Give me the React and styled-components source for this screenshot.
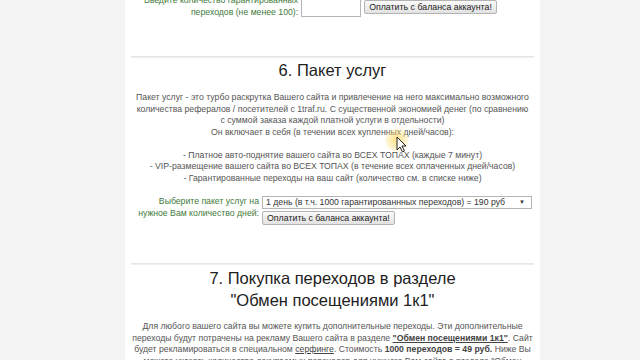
import styled, { createGlobalStyle } from "styled-components";

const Global = createGlobalStyle`
  html, body {
    margin: 0;
    padding: 0;
    background: #f4f4f4;
    overflow: hidden;
  }
  body {
    font-family: "Liberation Sans", Arial, sans-serif;
  }
`;

const Page = styled.div`
  position: relative;
  width: 415px;
  height: 380px;
  margin: -5px 0 0 125px;
  padding: 0 6px;
  box-sizing: border-box;
  background: #fff;
  color: #555;
  font-size: 8.7px;
  line-height: 11.5px;
`;

const Section = styled.section`
  padding: ${(p) => p.$pad || "0"};
  text-align: center;
`;

const Divider = styled.hr`
  margin: 0;
  border: 0;
  height: 2px;
  background: linear-gradient(#e2e2e2, #f2f2f2);
`;

const Heading = styled.h2`
  margin: 0;
  font-family: "Liberation Sans", Arial, sans-serif;
  font-weight: normal;
  font-size: 16.5px;
  line-height: 22px;
  color: #222;
`;

const Text = styled.p`
  margin: ${(p) => p.$m || "0"};
  text-align: center;
`;

const Form = styled.div`
  display: flex;
  justify-content: center;
  align-items: ${(p) => p.$align || "center"};
  gap: 3px;
  margin: ${(p) => p.$m || "0"};
`;

const Label = styled.div`
  width: ${(p) => p.$w};
  text-align: right;
  color: #3f7a3a;
`;

const Field = styled.div`
  display: flex;
  flex-direction: column;
  align-items: flex-start;
  gap: 2px;
`;

const Input = styled.div`
  width: 60px;
  height: 21px;
  border: 1px solid #b5b5b5;
  box-sizing: border-box;
  background: #fff;
`;

const Button = styled.button`
  height: 14px;
  padding: 0 4px;
  border: 1px solid #b3b3b3;
  border-radius: 2px;
  background: linear-gradient(#fafafa, #e2e2e2);
  font-family: "Liberation Sans", Arial, sans-serif;
  font-size: 8.8px;
  line-height: 12px;
  color: #222;
  white-space: nowrap;
`;

const Select = styled.div`
  display: flex;
  justify-content: space-between;
  align-items: center;
  width: 270px;
  height: 13px;
  padding: 0 6px 0 3px;
  box-sizing: border-box;
  border: 1px solid #b5b5b5;
  background: #fff;
  color: #333;
  white-space: nowrap;
`;

const Arrow = styled.span`
  font-size: 6px;
  color: #333;
`;

const Link = styled.a`
  color: #444;
  font-weight: ${(p) => (p.$bold ? "bold" : "normal")};
  text-decoration: underline;
`;

const Strong = styled.b`
  color: #444;
`;

const Cursor = styled.div`
  position: absolute;
  left: 260px;
  top: 133px;
  width: 30px;
  height: 30px;
  pointer-events: none;
`;

const Glow = styled.div`
  position: absolute;
  left: 0;
  top: 0;
  width: 24px;
  height: 24px;
  border-radius: 50%;
  background: radial-gradient(rgba(255, 214, 90, 0.75), rgba(255, 225, 120, 0.3) 60%, rgba(255, 230, 140, 0) 75%);
`;

export default function App() {
  return (
    <>
      <Global />
      <Page>
        <Section $pad="0 0 38px">
          <Form $m="0 0 0 -30px">
            <Label $w="160px">
              Введите количество гарантированных переходов (не менее 100):
            </Label>
            <Input />
            <Button>Оплатить с баланса аккаунта!</Button>
          </Form>
        </Section>
        <Divider />
        <Section $pad="1px 0 38px">
          <Heading>6. Пакет услуг</Heading>
          <Text $m="11px 0 0">
            Пакет услуг - это турбо раскрутка Вашего сайта и привлечение на него
            максимально возможного количества рефералов / посетителей с
            1traf.ru. С существенной экономией денег (по сравнению
            <br />с суммой заказа каждой платной услуги в отдельности)
            <br />
            Он включает в себя (в течении всех купленных дней/часов):
            <br />
            <br />- Платное авто-поднятие вашего сайта во ВСЕХ ТОПАХ (каждые 7
            минут)
            <br />- VIP-размещение вашего сайта во ВСЕХ ТОПАХ (в течение всех
            оплаченных дней/часов)
            <br />- Гарантированные переходы на ваш сайт (количество см. в
            списке ниже)
          </Text>
          <Form $align="flex-start" $m="12px 0 0">
            <Label $w="126px">
              Выберите пакет услуг на нужное Вам количество дней:
            </Label>
            <Field>
              <Select>
                <span>1 день (в т.ч. 1000 гарантированнных переходов) = 190 руб</span>
                <Arrow>▼</Arrow>
              </Select>
              <Button>Оплатить с баланса аккаунта!</Button>
            </Field>
          </Form>
        </Section>
        <Divider />
        <Section $pad="2px 0 0">
          <Heading>
            7. Покупка переходов в разделе
            <br />
            "Обмен посещениями 1к1"
          </Heading>
          <Text $m="10px 0 0">
            Для любого вашего сайта вы можете купить дополнительные переходы.
            Эти дополнительные переходы будут потрачены на рекламу Вашего сайта
            в разделе <Link $bold>"Обмен посещениями 1к1"</Link>. Сайт будет
            рекламироваться в специальном <Link>серфинге</Link>. Стоимость{" "}
            <Strong>1000 переходов = 49 руб.</Strong> Ниже Вы можете указать
            количество докупаемых переходов для нужного Вам сайта в разделе
            "Обмен посещениями 1к1".
          </Text>
        </Section>
        <Cursor>
          <Glow />
          <svg width="30" height="30" viewBox="0 0 30 30" style={{ position: "absolute", left: 0, top: 0 }}>
            <path d="M12 9 L12 22 L15 19 L17.5 24 L19.5 23 L17 18 L21 18 Z" fill="#fff" stroke="#222" strokeWidth="1" strokeLinejoin="round" />
          </svg>
        </Cursor>
      </Page>
    </>
  );
}
